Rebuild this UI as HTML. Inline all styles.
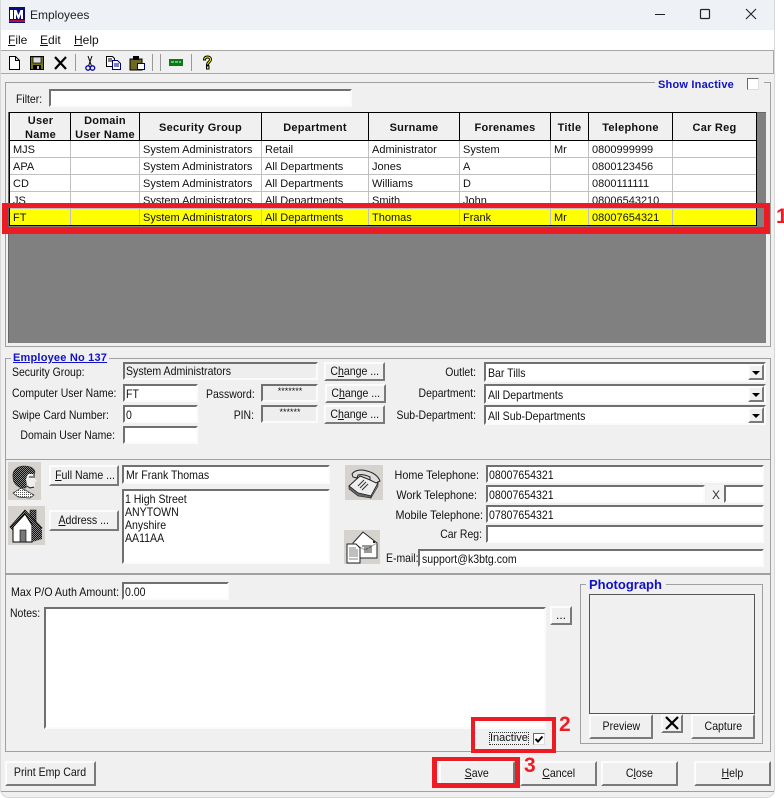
<!DOCTYPE html>
<html><head><meta charset="utf-8"><title>Employees</title>
<style>
html,body{margin:0;padding:0;background:#fff;}
#w{position:relative;width:784px;height:798px;overflow:hidden;background:#fff;font:11px "Liberation Sans",sans-serif;color:#111;}
#w div,#w svg{position:absolute;}
.t{white-space:nowrap;line-height:14px;}
.r{text-align:right;white-space:nowrap;line-height:14px;}
.c{font-size:12px;transform:scaleX(.87);transform-origin:0 50%;}
.cr{font-size:12px;transform:scaleX(.87);transform-origin:100% 50%;}
.w9{transform:scaleX(.9);}
.f{box-sizing:border-box;background:#fff;border:2px solid;border-color:#707070 #fbfbfb #fbfbfb #707070;padding-left:1px;line-height:14px;white-space:nowrap;font-size:12px;}
.f span{display:inline-block;transform:scaleX(.88);transform-origin:0 50%;}
.g{background:#eee;}
.b{box-sizing:border-box;background:#f0f0f0;border:2px solid;border-color:#fcfcfc #7a7a7a #7a7a7a #fcfcfc;text-align:center;white-space:nowrap;font-size:12px;}
.b span{display:inline-block;transform:scaleX(.88);transform-origin:50% 50%;}
.gb{box-sizing:border-box;border:1px solid #a0a0a0;}
.h{font-weight:bold;text-align:center;line-height:14px;background:#f0f0f0;letter-spacing:.25px;box-sizing:border-box;display:flex;align-items:center;justify-content:center;padding-top:2px;}
.l{background:#c0c0c0;}
.k{background:#000;}
.red{box-sizing:border-box;border:4px solid #ed1c24;}
.n{color:#ed1c24;font:bold 21px "Liberation Sans",sans-serif;line-height:22px;}
u{text-decoration:underline;}
</style></head><body><div id="w">
<!-- window -->
<div style="left:1px;top:0;width:773px;height:797px;background:#f0f0f0;border-radius:0 0 8px 8px;box-shadow:0 0 0 1px #d8d8d8"></div>
<div style="left:1px;top:0;width:773px;height:30px;background:#eef2f7"></div>
<div style="left:1px;top:30px;width:773px;height:20px;background:#fff"></div>
<svg style="left:9px;top:7px" width="16" height="16" viewBox="0 0 16 16"><rect width="16" height="16" fill="#0a0a78"/><rect y="13" width="16" height="2" fill="#b01040"/><path d="M1 3h3v9H1zM5 12V3h2.500L9.500 8 11.500 3H14v9h-2V7L10 12H9L7 7v5z" fill="#fff"/></svg>
<div class="t" style="left:30px;top:8px;font-size:12px;color:#222">Employees</div>
<svg style="left:650px;top:4px" width="125" height="22" viewBox="0 0 125 22"><path d="M5 10.500h10" stroke="#222" fill="none"/><rect x="50.500" y="5.500" width="9" height="9" rx="1" stroke="#222" fill="none" stroke-width="1.200"/><path d="M96 5l10 10M106 5l-10 10" stroke="#222" fill="none" stroke-width="1.100"/></svg>
<div class="t" style="left:8px;top:33px;font-size:12px"><u>F</u>ile</div>
<div class="t" style="left:40px;top:33px;font-size:12px"><u>E</u>dit</div>
<div class="t" style="left:74px;top:33px;font-size:12px"><u>H</u>elp</div>
<!-- toolbar -->
<div style="left:1px;top:50px;width:773px;height:24px;box-sizing:border-box;border:1px solid #a8a8a8;border-left:0;border-right:1px solid #a8a8a8;background:#f0f0f0"></div>
<svg style="left:0;top:50px" width="230" height="24" viewBox="0 0 230 24">
<path d="M9.500 6.500h6l4 4v9h-10zM15.500 6.500v4h4" fill="#fff" stroke="#000"/>
<rect x="30.500" y="6.500" width="13" height="13" fill="#7a7410" stroke="#000"/><rect x="33" y="7" width="8" height="6" fill="#ddd" stroke="#000" stroke-width=".7"/><rect x="33" y="15" width="8" height="5" fill="#000"/><rect x="37" y="16" width="2" height="3" fill="#bbb"/>
<path d="M55 7l11 12M66 7l-11 12" stroke="#000" stroke-width="2.200" fill="none"/>
<rect x="75" y="4" width="1" height="17" fill="#999"/>
<path d="M88 6l3.500 10M92 6l-3.500 10" stroke="#000" fill="none"/><circle cx="88" cy="18" r="2.200" fill="none" stroke="#0000a0" stroke-width="1.300"/><circle cx="92.500" cy="18" r="2.200" fill="none" stroke="#0000a0" stroke-width="1.300"/>
<path d="M106.500 6.500h6l2 2v8h-8z" fill="#fff" stroke="#000"/><path d="M108 9h4M108 11h4" stroke="#000"/><path d="M112.500 10.500h5l3 3v6h-8z" fill="#fff" stroke="#000080"/><path d="M114 14h5M114 16h5" stroke="#000080"/>
<path d="M130 9h12v11h-12z" fill="#6b6a20" stroke="#000"/><rect x="133" y="6" width="6" height="4" fill="#000"/><rect x="137.500" y="13.500" width="7" height="6" fill="#fff" stroke="#000080"/>
<rect x="152" y="4" width="1" height="17" fill="#999"/><rect x="160" y="4" width="1" height="17" fill="#999"/>
<rect x="169" y="9" width="14" height="7" fill="#0a7a12"/><path d="M171 12h3M175 12h3M179 12h2" stroke="#cfe" fill="none"/>
<rect x="191" y="4" width="1" height="17" fill="#999"/>
<path d="M203.500 10c0-3 1.500-4 4-4s4 1.500 4 3.500c0 3-3 3-3 5.500h-2c0-3.500 3-3.500 3-5.500 0-1-.5-1.500-2-1.500s-2 .5-2 2zM206.500 16h2.500v3h-2.500z" fill="#ff0" stroke="#000" stroke-width="1"/>
</svg>

<!-- group 1 -->
<div class="gb" style="left:5px;top:82px;width:766px;height:265px"></div>
<div class="t" style="left:655px;top:76px;width:109px;height:14px;background:#f0f0f0"></div>
<div class="t" style="left:658px;top:78px;font-weight:bold;color:#1010c8;letter-spacing:.2px">Show Inactive</div>
<div style="box-sizing:border-box;left:747px;top:78px;width:12px;height:12px;background:#fff;border:1px solid;border-color:#666 #ddd #ddd #666"></div>
<div class="t c" style="left:16px;top:92px">Filter:</div>
<div class="f" style="left:49px;top:89px;width:303px;height:18px"></div>
<!-- grid -->
<div style="left:8px;top:112px;width:758px;height:231px;background:#808080;box-sizing:border-box;border-top:1px solid #666;border-left:1px solid #666"></div>
<div style="left:10px;top:113px;width:746px;height:113px;background:#fff"></div>
<div class="k" style="left:10px;top:112px;width:747px;height:1px"></div>
<div class="k" style="left:9px;top:112px;width:1px;height:114px"></div>
<div class="h" style="left:11px;top:113px;width:59px;height:27px">User<br>Name</div>
<div class="h" style="left:71px;top:113px;width:68px;height:27px">Domain<br>User Name</div>
<div class="h" style="left:140px;top:113px;width:121px;height:27px">Security Group</div>
<div class="h" style="left:262px;top:113px;width:106px;height:27px">Department</div>
<div class="h" style="left:369px;top:113px;width:90px;height:27px">Surname</div>
<div class="h" style="left:460px;top:113px;width:90px;height:27px">Forenames</div>
<div class="h" style="left:551px;top:113px;width:37px;height:27px">Title</div>
<div class="h" style="left:589px;top:113px;width:83px;height:27px">Telephone</div>
<div class="h" style="left:673px;top:113px;width:83px;height:27px">Car Reg</div>
<div class="k" style="left:10px;top:140px;width:746px;height:1px"></div>
<div class="k" style="left:70px;top:113px;width:1px;height:28px"></div>
<div class="k" style="left:139px;top:113px;width:1px;height:28px"></div>
<div class="k" style="left:261px;top:113px;width:1px;height:28px"></div>
<div class="k" style="left:368px;top:113px;width:1px;height:28px"></div>
<div class="k" style="left:459px;top:113px;width:1px;height:28px"></div>
<div class="k" style="left:550px;top:113px;width:1px;height:28px"></div>
<div class="k" style="left:588px;top:113px;width:1px;height:28px"></div>
<div class="k" style="left:672px;top:113px;width:1px;height:28px"></div>
<!-- yellow row -->
<div style="left:10px;top:208px;width:746px;height:17px;background:#ff0"></div>
<!-- row lines -->
<div class="l" style="left:10px;top:157px;width:746px;height:1px"></div>
<div class="l" style="left:10px;top:174px;width:746px;height:1px"></div>
<div class="l" style="left:10px;top:191px;width:746px;height:1px"></div>
<div class="l" style="left:10px;top:208px;width:746px;height:1px"></div>
<div class="k" style="left:10px;top:225px;width:746px;height:1px"></div>
<div class="k" style="left:756px;top:113px;width:1px;height:113px"></div>
<div class="l" style="left:70px;top:141px;width:1px;height:84px"></div>
<div class="l" style="left:139px;top:141px;width:1px;height:84px"></div>
<div class="l" style="left:261px;top:141px;width:1px;height:84px"></div>
<div class="l" style="left:368px;top:141px;width:1px;height:84px"></div>
<div class="l" style="left:459px;top:141px;width:1px;height:84px"></div>
<div class="l" style="left:550px;top:141px;width:1px;height:84px"></div>
<div class="l" style="left:588px;top:141px;width:1px;height:84px"></div>
<div class="l" style="left:672px;top:141px;width:1px;height:84px"></div>
<!-- rows -->
<div class="t" style="left:13px;top:143px">MJS</div><div class="t" style="left:143px;top:143px">System Administrators</div><div class="t" style="left:265px;top:143px">Retail</div><div class="t" style="left:372px;top:143px">Administrator</div><div class="t" style="left:463px;top:143px">System</div><div class="t" style="left:554px;top:143px">Mr</div><div class="t" style="left:592px;top:143px">0800999999</div>
<div class="t" style="left:13px;top:160px">APA</div><div class="t" style="left:143px;top:160px">System Administrators</div><div class="t" style="left:265px;top:160px">All Departments</div><div class="t" style="left:372px;top:160px">Jones</div><div class="t" style="left:463px;top:160px">A</div><div class="t" style="left:592px;top:160px">0800123456</div>
<div class="t" style="left:13px;top:177px">CD</div><div class="t" style="left:143px;top:177px">System Administrators</div><div class="t" style="left:265px;top:177px">All Departments</div><div class="t" style="left:372px;top:177px">Williams</div><div class="t" style="left:463px;top:177px">D</div><div class="t" style="left:592px;top:177px">0800111111</div>
<div class="t" style="left:13px;top:194px">JS</div><div class="t" style="left:143px;top:194px">System Administrators</div><div class="t" style="left:265px;top:194px">All Departments</div><div class="t" style="left:372px;top:194px">Smith</div><div class="t" style="left:463px;top:194px">John</div><div class="t" style="left:592px;top:194px">08006543210</div>
<div class="t" style="left:13px;top:211px">FT</div><div class="t" style="left:143px;top:211px">System Administrators</div><div class="t" style="left:265px;top:211px">All Departments</div><div class="t" style="left:372px;top:211px">Thomas</div><div class="t" style="left:463px;top:211px">Frank</div><div class="t" style="left:554px;top:211px">Mr</div><div class="t" style="left:592px;top:211px">08007654321</div>
<div class="red" style="left:2px;top:203px;width:768px;height:31px;border-width:5px 6px 7px 6px"></div>
<div class="n" style="left:776px;top:206px">1</div>

<!-- group 2 -->
<div class="gb" style="left:5px;top:358px;width:766px;height:102px;border-bottom:0"></div>
<div class="t" style="left:11px;top:350px;width:98px;height:14px;background:#f0f0f0"></div>
<div class="t" style="left:13px;top:351px;font-weight:bold;color:#1010c8;text-decoration:underline;letter-spacing:.2px">Employee No 137</div>
<div class="t c" style="left:12px;top:365px">Security Group:</div>
<div class="f g" style="left:123px;top:362px;width:195px;height:18px;line-height:15px"><span>System Administrators</span></div>
<div class="b" style="left:324px;top:362px;width:61px;height:19px;line-height:14px"><span>C<u>h</u>ange ...</span></div>
<div class="t c" style="left:12px;top:386px">Computer User Name:</div>
<div class="f" style="left:123px;top:384px;width:75px;height:18px;line-height:16px"><span>FT</span></div>
<div class="t c" style="left:206px;top:387px">Password:</div>
<div class="f g" style="left:261px;top:384px;width:57px;height:18px;text-align:center;font-size:9px;line-height:10px">*******</div>
<div class="b" style="left:325px;top:384px;width:61px;height:19px;line-height:14px"><span>C<u>h</u>ange ...</span></div>
<div class="t c" style="left:12px;top:408px">Swipe Card Number:</div>
<div class="f" style="left:123px;top:405px;width:75px;height:18px;line-height:16px"><span>0</span></div>
<div class="r cr" style="left:206px;top:408px;width:48px">PIN:</div>
<div class="f g" style="left:261px;top:405px;width:57px;height:18px;text-align:center;font-size:9px;line-height:10px">******</div>
<div class="b" style="left:324px;top:405px;width:61px;height:19px;line-height:14px"><span>C<u>h</u>ange ...</span></div>
<div class="r cr" style="left:5px;top:428px;width:110px">Domain User Name:</div>
<div class="f" style="left:123px;top:426px;width:75px;height:18px"></div>

<div class="r cr" style="left:396px;top:365px;width:80px">Outlet:</div>
<div class="f" style="left:484px;top:362px;width:282px;height:20px;padding-left:2px;line-height:18px"><span>Bar Tills</span></div>
<div class="r cr" style="left:396px;top:386px;width:80px">Department:</div>
<div class="f" style="left:484px;top:384px;width:282px;height:20px;padding-left:2px;line-height:18px"><span>All Departments</span></div>
<div class="r cr" style="left:376px;top:408px;width:100px">Sub-Department:</div>
<div class="f" style="left:484px;top:405px;width:282px;height:20px;padding-left:2px;line-height:18px"><span>All Sub-Departments</span></div>
<div class="b" style="left:748px;top:364px;width:16px;height:16px"></div>
<div class="b" style="left:748px;top:386px;width:16px;height:16px"></div>
<div class="b" style="left:748px;top:407px;width:16px;height:16px"></div>
<svg style="left:748px;top:364px" width="16" height="60" viewBox="0 0 16 60"><path d="M4 7h8l-4 4zM4 29h8l-4 4zM4 50h8l-4 4z" fill="#000"/></svg>

<!-- group 3 -->
<div class="gb" style="left:5px;top:459px;width:766px;height:115px"></div>
<svg width="0" height="0" style="left:0;top:0"><defs>
<pattern id="dk" width="2" height="2" patternUnits="userSpaceOnUse"><rect width="2" height="2" fill="#111"/><rect width="1" height="1" fill="#888"/><rect x="1" y="1" width="1" height="1" fill="#888"/></pattern>
<pattern id="lt" width="2" height="2" patternUnits="userSpaceOnUse"><rect width="2" height="2" fill="#fff"/><rect width="1" height="1" fill="#555"/></pattern>
</defs></svg>
<svg style="left:8px;top:462px" width="33" height="38" viewBox="0 0 33 38"><rect width="33" height="38" fill="#d6d3ce"/><path d="M5 15C4 8 10 4 16 4c6 0 10 2 11 6l-1 3h-5l-2 5-1 8-4 0C7 24 5 20 5 15z" fill="url(#dk)" stroke="#222" stroke-width=".6"/><path d="M20 12h6l1 5 2 2-2 1v5l-5 1-3-2-1-7z" fill="#eee"/><path d="M21 15h4M26 12v4M19 24l3 2 4-1" stroke="#111" fill="none"/><path d="M5 31l8-5 6 3 7 4-4 3-12-1z" fill="url(#lt)" stroke="#222" stroke-width=".7"/></svg>
<svg style="left:8px;top:506px" width="37" height="39" viewBox="0 0 37 39"><rect width="37" height="39" fill="#d6d3ce"/><path d="M22 4h6v12l-6-6z" fill="url(#dk)" stroke="#111" stroke-width=".6"/><path d="M2 21L17 4l17 18-3 2H5z" fill="url(#dk)" stroke="#000" stroke-width=".7"/><path d="M17 8L5 21v15h19V19z" fill="#fff" stroke="#000"/><path d="M24 19l10 5v9l-10 3z" fill="url(#dk)"/><rect x="12" y="24" width="6" height="12" fill="#777" stroke="#000" stroke-width=".6"/></svg>
<div class="b" style="left:49px;top:465px;width:70px;height:21px;line-height:17px"><span><u>F</u>ull Name ...</span></div>
<div class="b" style="left:49px;top:510px;width:70px;height:21px;line-height:17px"><span><u>A</u>ddress ...</span></div>
<div class="f" style="left:122px;top:465px;width:208px;height:19px;padding-left:2px;line-height:16px"><span>Mr Frank Thomas</span></div>
<div class="f" style="left:122px;top:489px;width:208px;height:75px;padding:2px 0 0 1px;line-height:13px"><span>1 High Street<br>ANYTOWN<br>Anyshire<br>AA11AA</span></div>
<svg style="left:345px;top:465px" width="38" height="35" viewBox="0 0 38 35"><rect width="38" height="35" fill="#d6d3ce"/><path d="M4 21L15 11l18 7-7 13-13-3z" fill="#eee" stroke="#222"/><path d="M4 21l9 7 13 3v2l-13-2-9-7z" fill="#666" stroke="#222" stroke-width=".6"/><path d="M26 31l7-13v3l-7 12z" fill="#888" stroke="#222" stroke-width=".6"/><path d="M7 9c3-4 9-5 15-3 6 1.500 11 5 13 10l-4 2-6-3 0-3c-4-2-8-3-12-2l-1 3-4-1z" fill="#ddd" stroke="#222"/><path d="M13 21l6-6M15 23l6-6M17 25l6-6" stroke="#333" fill="none"/></svg>
<svg style="left:344px;top:530px" width="36" height="34" viewBox="0 0 36 34"><rect width="36" height="34" fill="#d6d3ce"/><path d="M9 13L19 2l14 11v15H9z" fill="#fff" stroke="#222"/><path d="M9 13l12 7 12-7" fill="none" stroke="#999"/><path d="M18 16h10M20 18h8M20 20h8M20 22h8" stroke="#333"/><rect x="29" y="11" width="2" height="2" fill="#222"/><path d="M3 14h9l4 4v15H3z" fill="#fff" stroke="#222"/><path d="M5 18h7M5 20h9M5 22h9M5 24h9M5 26h9M5 29h9" stroke="#555" stroke-width=".8"/></svg>
<div class="r cr w9" style="left:375px;top:468px;width:104px">Home Telephone:</div>
<div class="f" style="left:486px;top:465px;width:278px;height:18px;line-height:16px"><span>08007654321</span></div>
<div class="r cr w9" style="left:375px;top:488px;width:102px">Work Telephone:</div>
<div class="f" style="left:486px;top:485px;width:219px;height:18px;line-height:16px"><span>08007654321</span></div>
<div style="left:706px;top:485px;width:18px;height:18px;background:#f4f4f4"></div>
<div class="t" style="left:712px;top:488px;font-size:12px;color:#333">X</div>
<div class="f" style="left:724px;top:485px;width:40px;height:18px"></div>
<div class="r cr w9" style="left:375px;top:508px;width:108px">Mobile Telephone:</div>
<div class="f" style="left:486px;top:505px;width:278px;height:18px;line-height:16px"><span>07807654321</span></div>
<div class="r cr" style="left:420px;top:527px;width:62px">Car Reg:</div>
<div class="f" style="left:486px;top:525px;width:278px;height:18px"></div>
<div class="t c" style="left:386px;top:551px">E-mail:</div>
<div class="f" style="left:418px;top:549px;width:346px;height:18px;padding-left:2px;line-height:16px"><span>support@k3btg.com</span></div>

<!-- group 4 -->
<div class="gb" style="left:5px;top:574px;width:766px;height:178px"></div>
<div class="t c" style="left:11px;top:585px;transform:scaleX(.89)">Max P/O Auth Amount:</div>
<div class="f" style="left:122px;top:582px;width:107px;height:18px;line-height:16px"><span>0.00</span></div>
<div class="t c" style="left:10px;top:606px">Notes:</div>
<div class="f" style="left:44px;top:607px;width:502px;height:122px"></div>
<div class="b" style="left:550px;top:606px;width:22px;height:19px;line-height:14px">...</div>
<div class="gb" style="left:580px;top:584px;width:183px;height:160px"></div>
<div style="left:586px;top:576px;width:80px;height:16px;background:#f0f0f0"></div>
<div class="t" style="left:589px;top:577px;font-size:13px;font-weight:bold;color:#1010c8;line-height:15px">Photograph</div>
<div style="box-sizing:border-box;left:589px;top:594px;width:166px;height:120px;border:1px solid #555"></div>
<div class="b" style="left:589px;top:714px;width:64px;height:25px;line-height:21px"><span>Preview</span></div>
<div class="b" style="left:661px;top:714px;width:22px;height:19px"></div>
<svg style="left:661px;top:714px" width="22" height="19" viewBox="0 0 22 19"><path d="M5 3l12 12M17 3L5 15" stroke="#000" stroke-width="2.200" fill="none"/></svg>
<div class="b" style="left:691px;top:714px;width:64px;height:25px;line-height:21px"><span>Capture</span></div>
<div class="t" style="left:489px;top:732px;height:13px;line-height:13px;outline:1px dotted #333;outline-offset:-1px;padding:0 1px">Inactive</div>
<div style="box-sizing:border-box;left:533px;top:733px;width:12px;height:12px;background:#fff;border:1px solid;border-color:#666 #ddd #ddd #666"></div>
<svg style="left:533px;top:733px" width="12" height="12" viewBox="0 0 12 12"><path d="M2.500 6l2.500 2.500L9.500 3.500" stroke="#000" stroke-width="2" fill="none"/></svg>
<div class="red" style="left:471px;top:717px;width:85px;height:36px"></div>
<div class="n" style="left:559px;top:714px">2</div>

<!-- bottom buttons -->
<div class="b" style="left:5px;top:761px;width:91px;height:25px;line-height:19px"><span>Print Emp Card</span></div>
<div class="b" style="left:439px;top:761px;width:76px;height:25px;line-height:20px"><span><u>S</u>ave</span></div>
<div class="b" style="left:520px;top:761px;width:77px;height:25px;line-height:20px"><span><u>C</u>ancel</span></div>
<div class="b" style="left:601px;top:761px;width:77px;height:25px;line-height:20px"><span>C<u>l</u>ose</span></div>
<div class="b" style="left:694px;top:761px;width:77px;height:25px;line-height:20px"><span><u>H</u>elp</span></div>
<div class="red" style="left:432px;top:757px;width:88px;height:31px;border-width:4px 5px 5px 5px"></div>
<div class="n" style="left:524px;top:755px">3</div>
<div style="left:1px;top:791px;width:773px;height:1px;background:#a0a0a0"></div>
</div></body></html>
